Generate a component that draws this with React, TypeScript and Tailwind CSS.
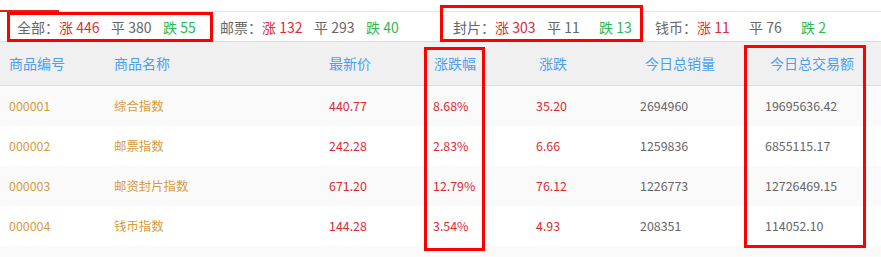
const RED = "text-[#dc2b35]";
const GREEN = "text-[#2cb94e]";

type Group = { label: string; up: number; flat: number; down: number; width: string };

const groups: Group[] = [
  { label: "全部", up: 446, flat: 380, down: 55, width: "w-[203px]" },
  { label: "邮票", up: 132, flat: 293, down: 40, width: "w-[233px]" },
  { label: "封片", up: 303, flat: 11, down: 13, width: "w-[202px]" },
  { label: "钱币", up: 11, flat: 76, down: 2, width: "w-[200px]" },
];

const rows = [
  ["000001", "综合指数", "440.77", "8.68%", "35.20", "2694960", "19695636.42"],
  ["000002", "邮票指数", "242.28", "2.83%", "6.66", "1259836", "6855115.17"],
  ["000003", "邮资封片指数", "671.20", "12.79%", "76.12", "1226773", "12726469.15"],
  ["000004", "钱币指数", "144.28", "3.54%", "4.93", "208351", "114052.10"],
];

const cols = "grid grid-cols-[105px_215px_104px_103px_104px_125px_1fr]";

function StatGroup({ g }: { g: Group }) {
  return (
    <div className={`flex items-center ${g.width}`}>
      <span className="w-[42px] text-[#666]">{g.label}：</span>
      <span className={`w-[52px] ${RED}`}>涨 {g.up}</span>
      <span className="w-[52px] text-[#666]">平 {g.flat}</span>
      <span className={GREEN}>跌 {g.down}</span>
    </div>
  );
}

export default function App() {
  return (
    <div className="relative h-[257px] w-[881px] overflow-hidden bg-white font-['Noto_Sans_CJK_SC',sans-serif]">
      {/* tab strip */}
      <div className="h-[12px] border-b border-[#e2e2e2] pt-[10px]">
        <div className="h-[2px] w-[59px] bg-[#d9251d]" />
      </div>

      {/* summary */}
      <div className="flex h-[30px] items-center border-b border-[#dcdcdc] pl-[17px] text-[14px] leading-none">
        {groups.map((g) => (
          <StatGroup g={g} key={g.label} />
        ))}
      </div>

      {/* header */}
      <div className={`${cols} h-[44px] items-center border-b border-[#dcdcdc] bg-[#f0f0f0] text-[14px] text-[#4b9ff2]`}>
        <span className="pl-[9px]">商品编号</span>
        <span className="pl-[9px]">商品名称</span>
        <span className="pl-[9px]">最新价</span>
        <span className="pl-[10px]">涨跌幅</span>
        <span className="pl-[12px]">涨跌</span>
        <span className="pl-[14px]">今日总销量</span>
        <span className="pl-[14px]">今日总交易额</span>
      </div>

      {/* rows */}
      {rows.map((r, i) => (
        <div
          className={`${cols} h-[40px] items-center text-[12.4px] ${i % 2 === 0 ? "bg-[#fafafa]" : "bg-white"}`}
          key={r[0]}
        >
          <span className="pl-[9px] text-[#d89b3c]">{r[0]}</span>
          <span className="pl-[9px] text-[#d89b3c]">{r[1]}</span>
          <span className={`pl-[9px] ${RED}`}>{r[2]}</span>
          <span className={`pl-[9px] ${RED}`}>{r[3]}</span>
          <span className={`pl-[9px] ${RED}`}>{r[4]}</span>
          <span className="pl-[9px] text-[#666]">{r[5]}</span>
          <span className="pl-[9px] text-[#666]">{r[6]}</span>
        </div>
      ))}
      <div className="h-[40px] bg-[#fafafa]" />

      {/* annotation boxes */}
      <div className="absolute left-[7px] top-[12px] h-[30px] w-[206px] border-[3px] border-[#ff0000]" />
      <div className="absolute left-[440px] top-[5px] h-[37px] w-[203px] border-[3px] border-[#ff0000]" />
      <div className="absolute left-[424px] top-[47px] h-[204px] w-[61px] border-[3px] border-[#ff0000]" />
      <div className="absolute left-[744px] top-[45px] h-[203px] w-[122px] border-[3px] border-[#ff0000]" />
    </div>
  );
}
